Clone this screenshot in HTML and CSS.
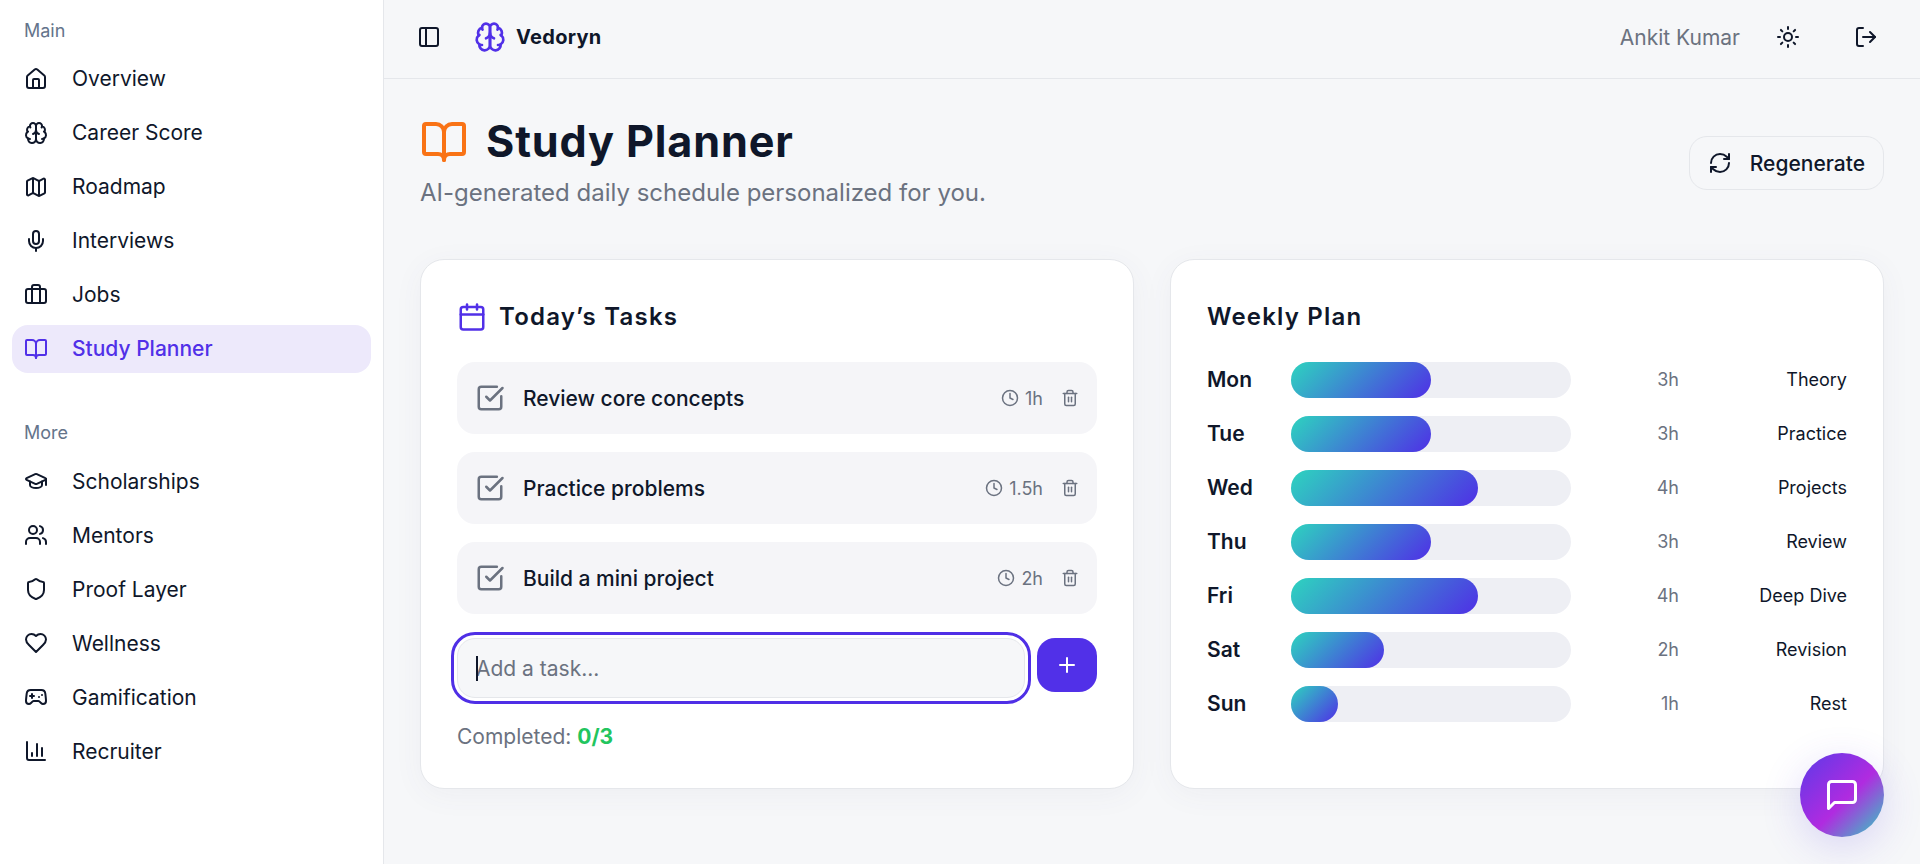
FILE: index.html
```html
<!DOCTYPE html>
<html lang="en">
<head>
  <meta charset="UTF-8">
  <title>Study Planner - Vedoryn</title>
  <link rel="stylesheet" href="styles.css">
</head>
<body>
  <!-- icon set, used through <use> below -->
  <svg class="sprite" xmlns="http://www.w3.org/2000/svg">
    <symbol id="i-home" viewBox="0 0 24 24"><path d="M15 21v-8a1 1 0 0 0-1-1h-4a1 1 0 0 0-1 1v8"/><path d="M3 10a2 2 0 0 1 .709-1.528l7-5.999a2 2 0 0 1 2.582 0l7 5.999A2 2 0 0 1 21 10v9a2 2 0 0 1-2 2H5a2 2 0 0 1-2-2z"/></symbol>
    <symbol id="i-brain" viewBox="0 0 24 24"><path d="M12 5a3 3 0 1 0-5.997.125 4 4 0 0 0-2.526 5.77 4 4 0 0 0 .556 6.588A4 4 0 1 0 12 18Z"/><path d="M12 5a3 3 0 1 1 5.997.125 4 4 0 0 1 2.526 5.77 4 4 0 0 1-.556 6.588A4 4 0 1 1 12 18Z"/><path d="M15 13a4.5 4.5 0 0 1-3-4 4.5 4.5 0 0 1-3 4"/><path d="M17.599 6.5a3 3 0 0 0 .399-1.375"/><path d="M6.003 5.125A3 3 0 0 0 6.401 6.5"/><path d="M3.477 10.896a4 4 0 0 1 .585-.396"/><path d="M19.938 10.5a4 4 0 0 1 .585.396"/><path d="M6 18a4 4 0 0 1-1.967-.516"/><path d="M19.967 17.484A4 4 0 0 1 18 18"/></symbol>
    <symbol id="i-map" viewBox="0 0 24 24"><path d="M14.106 5.553a2 2 0 0 0 1.788 0l3.659-1.83A1 1 0 0 1 21 4.619v12.764a1 1 0 0 1-.553.894l-4.553 2.277a2 2 0 0 1-1.788 0l-4.212-2.106a2 2 0 0 0-1.788 0l-3.659 1.83A1 1 0 0 1 3 19.381V6.618a1 1 0 0 1 .553-.894l4.553-2.277a2 2 0 0 1 1.788 0z"/><path d="M15 5.764v15"/><path d="M9 3.236v15"/></symbol>
    <symbol id="i-mic" viewBox="0 0 24 24"><path d="M12 19v3"/><path d="M19 10v2a7 7 0 0 1-14 0v-2"/><rect x="9" y="2" width="6" height="13" rx="3"/></symbol>
    <symbol id="i-briefcase" viewBox="0 0 24 24"><path d="M16 20V4a2 2 0 0 0-2-2h-4a2 2 0 0 0-2 2v16"/><rect x="2" y="6" width="20" height="14" rx="2"/></symbol>
    <symbol id="i-book" viewBox="0 0 24 24"><path d="M12 7v14"/><path d="M3 18a1 1 0 0 1-1-1V4a1 1 0 0 1 1-1h5a4 4 0 0 1 4 4 4 4 0 0 1 4-4h5a1 1 0 0 1 1 1v13a1 1 0 0 1-1 1h-6a3 3 0 0 0-3 3 3 3 0 0 0-3-3z"/></symbol>
    <symbol id="i-cap" viewBox="0 0 24 24"><path d="M21.42 10.922a1 1 0 0 0-.019-1.838L12.83 5.18a2 2 0 0 0-1.66 0L2.6 9.08a1 1 0 0 0 0 1.832l8.57 3.908a2 2 0 0 0 1.66 0z"/><path d="M22 10v6"/><path d="M6 12.5V16a6 3 0 0 0 12 0v-3.5"/></symbol>
    <symbol id="i-users" viewBox="0 0 24 24"><path d="M16 21v-2a4 4 0 0 0-4-4H6a4 4 0 0 0-4 4v2"/><circle cx="9" cy="7" r="4"/><path d="M22 21v-2a4 4 0 0 0-3-3.87"/><path d="M16 3.13a4 4 0 0 1 0 7.75"/></symbol>
    <symbol id="i-shield" viewBox="0 0 24 24"><path d="M20 13c0 5-3.5 7.5-7.66 8.95a1 1 0 0 1-.67-.01C7.5 20.5 4 18 4 13V6a1 1 0 0 1 1-1c2 0 4.5-1.2 6.24-2.72a1.17 1.17 0 0 1 1.52 0C14.51 3.81 17 5 19 5a1 1 0 0 1 1 1z"/></symbol>
    <symbol id="i-heart" viewBox="0 0 24 24"><path d="M19 14c1.49-1.46 3-3.21 3-5.5A5.5 5.5 0 0 0 16.5 3c-1.76 0-3 .5-4.5 2-1.5-1.5-2.74-2-4.5-2A5.5 5.5 0 0 0 2 8.5c0 2.3 1.5 4.05 3 5.5l7 7Z"/></symbol>
    <symbol id="i-gamepad" viewBox="0 0 24 24"><path d="M6 11h4"/><path d="M8 9v4"/><path d="M15 12h.01"/><path d="M18 10h.01"/><path d="M17.32 5H6.68a4 4 0 0 0-3.978 3.59c-.006.052-.01.101-.017.152C2.604 9.416 2 14.456 2 16a3 3 0 0 0 3 3c1 0 1.5-.5 2-1l1.414-1.414A2 2 0 0 1 9.828 16h4.344a2 2 0 0 1 1.414.586L17 18c.5.5 1 1 2 1a3 3 0 0 0 3-3c0-1.545-.604-6.584-.685-7.258-.007-.05-.011-.1-.017-.151A4 4 0 0 0 17.32 5z"/></symbol>
    <symbol id="i-chart" viewBox="0 0 24 24"><path d="M3 3v16a2 2 0 0 0 2 2h16"/><path d="M18 17V9"/><path d="M13 17V5"/><path d="M8 17v-3"/></symbol>
    <symbol id="i-panel" viewBox="0 0 24 24"><rect x="3" y="3" width="18" height="18" rx="2"/><path d="M9 3v18"/></symbol>
    <symbol id="i-sun" viewBox="0 0 24 24"><circle cx="12" cy="12" r="4"/><path d="M12 2v2"/><path d="M12 20v2"/><path d="m4.93 4.93 1.41 1.41"/><path d="m17.66 17.66 1.41 1.41"/><path d="M2 12h2"/><path d="M20 12h2"/><path d="m6.34 17.66-1.41 1.41"/><path d="m19.07 4.93-1.41 1.41"/></symbol>
    <symbol id="i-logout" viewBox="0 0 24 24"><path d="M9 21H5a2 2 0 0 1-2-2V5a2 2 0 0 1 2-2h4"/><path d="m16 17 5-5-5-5"/><path d="M21 12H9"/></symbol>
    <symbol id="i-refresh" viewBox="0 0 24 24"><path d="M3 12a9 9 0 0 1 9-9 9.75 9.75 0 0 1 6.74 2.74L21 8"/><path d="M21 3v5h-5"/><path d="M21 12a9 9 0 0 1-9 9 9.75 9.75 0 0 1-6.74-2.74L3 16"/><path d="M8 16H3v5"/></symbol>
    <symbol id="i-calendar" viewBox="0 0 24 24"><path d="M8 2v4"/><path d="M16 2v4"/><rect x="3" y="4" width="18" height="18" rx="2"/><path d="M3 10h18"/></symbol>
    <symbol id="i-check" viewBox="0 0 24 24"><path d="M21 10.5V19a2 2 0 0 1-2 2H5a2 2 0 0 1-2-2V5a2 2 0 0 1 2-2h12.5"/><path d="m9 11 3 3L22 4"/></symbol>
    <symbol id="i-clock" viewBox="0 0 24 24"><circle cx="12" cy="12" r="10"/><path d="M12 6v6l4 2"/></symbol>
    <symbol id="i-trash" viewBox="0 0 24 24"><path d="M3 6h18"/><path d="M19 6v14c0 1-1 2-2 2H7c-1 0-2-1-2-2V6"/><path d="M8 6V4c0-1 1-2 2-2h4c1 0 2 1 2 2v2"/><path d="M10 11v6"/><path d="M14 11v6"/></symbol>
    <symbol id="i-plus" viewBox="0 0 24 24"><path d="M5 12h14"/><path d="M12 5v14"/></symbol>
    <symbol id="i-chat" viewBox="0 0 24 24"><path d="M21 15a2 2 0 0 1-2 2H7l-4 4V5a2 2 0 0 1 2-2h14a2 2 0 0 1 2 2z"/></symbol>
  </svg>

  <aside class="sidebar">
    <div class="nav-label">Main</div>
    <nav class="nav">
      <a class="nav-item"><svg class="icon"><use href="#i-home"/></svg>Overview</a>
      <a class="nav-item"><svg class="icon"><use href="#i-brain"/></svg>Career Score</a>
      <a class="nav-item"><svg class="icon"><use href="#i-map"/></svg>Roadmap</a>
      <a class="nav-item"><svg class="icon"><use href="#i-mic"/></svg>Interviews</a>
      <a class="nav-item"><svg class="icon"><use href="#i-briefcase"/></svg>Jobs</a>
      <a class="nav-item active"><svg class="icon"><use href="#i-book"/></svg>Study Planner</a>
    </nav>
    <div class="nav-label more">More</div>
    <nav class="nav">
      <a class="nav-item"><svg class="icon"><use href="#i-cap"/></svg>Scholarships</a>
      <a class="nav-item"><svg class="icon"><use href="#i-users"/></svg>Mentors</a>
      <a class="nav-item"><svg class="icon"><use href="#i-shield"/></svg>Proof Layer</a>
      <a class="nav-item"><svg class="icon"><use href="#i-heart"/></svg>Wellness</a>
      <a class="nav-item"><svg class="icon"><use href="#i-gamepad"/></svg>Gamification</a>
      <a class="nav-item"><svg class="icon"><use href="#i-chart"/></svg>Recruiter</a>
    </nav>
  </aside>

  <div class="main">
    <header class="topbar">
      <svg class="icon"><use href="#i-panel"/></svg>
      <div class="brand">
        <svg class="icon brand-icon"><use href="#i-brain"/></svg>
        <span class="brand-name">Vedoryn</span>
      </div>
      <span class="user-name">Ankit Kumar</span>
      <svg class="icon sun"><use href="#i-sun"/></svg>
      <svg class="icon logout"><use href="#i-logout"/></svg>
    </header>

    <main class="page">
      <div class="page-head">
        <div class="page-intro">
          <h1 class="page-title"><svg class="icon title-icon"><use href="#i-book"/></svg>Study Planner</h1>
          <p class="page-sub">AI-generated daily schedule personalized for you.</p>
        </div>
        <button class="regen" type="button"><svg class="icon"><use href="#i-refresh"/></svg>Regenerate</button>
      </div>

      <div class="cards">
        <section class="card">
          <h2 class="card-title"><svg class="icon cal-icon"><use href="#i-calendar"/></svg>Today’s Tasks</h2>
          <div class="tasks">
            <div class="task">
              <svg class="icon task-check"><use href="#i-check"/></svg>
              <span class="task-name">Review core concepts</span>
              <span class="task-time"><svg class="icon small"><use href="#i-clock"/></svg>1h</span>
              <svg class="icon small task-del"><use href="#i-trash"/></svg>
            </div>
            <div class="task">
              <svg class="icon task-check"><use href="#i-check"/></svg>
              <span class="task-name">Practice problems</span>
              <span class="task-time"><svg class="icon small"><use href="#i-clock"/></svg>1.5h</span>
              <svg class="icon small task-del"><use href="#i-trash"/></svg>
            </div>
            <div class="task">
              <svg class="icon task-check"><use href="#i-check"/></svg>
              <span class="task-name">Build a mini project</span>
              <span class="task-time"><svg class="icon small"><use href="#i-clock"/></svg>2h</span>
              <svg class="icon small task-del"><use href="#i-trash"/></svg>
            </div>
          </div>
          <form class="add-form">
            <div class="add-field">
              <input class="add-input" type="text" placeholder="Add a task...">
            </div>
            <button class="add-btn" type="button"><svg class="icon"><use href="#i-plus"/></svg></button>
          </form>
          <p class="done">Completed: <b>0/3</b></p>
        </section>

        <section class="card">
          <h2 class="card-title">Weekly Plan</h2>
          <div class="week">
            <div class="day">
              <span class="day-name">Mon</span>
              <div class="bar"><div class="fill" style="width:50%"></div></div>
              <span class="day-hours">3h</span><span class="day-topic">Theory</span>
            </div>
            <div class="day">
              <span class="day-name">Tue</span>
              <div class="bar"><div class="fill" style="width:50%"></div></div>
              <span class="day-hours">3h</span><span class="day-topic">Practice</span>
            </div>
            <div class="day">
              <span class="day-name">Wed</span>
              <div class="bar"><div class="fill" style="width:66.67%"></div></div>
              <span class="day-hours">4h</span><span class="day-topic">Projects</span>
            </div>
            <div class="day">
              <span class="day-name">Thu</span>
              <div class="bar"><div class="fill" style="width:50%"></div></div>
              <span class="day-hours">3h</span><span class="day-topic">Review</span>
            </div>
            <div class="day">
              <span class="day-name">Fri</span>
              <div class="bar"><div class="fill" style="width:66.67%"></div></div>
              <span class="day-hours">4h</span><span class="day-topic">Deep Dive</span>
            </div>
            <div class="day">
              <span class="day-name">Sat</span>
              <div class="bar"><div class="fill" style="width:33.33%"></div></div>
              <span class="day-hours">2h</span><span class="day-topic">Revision</span>
            </div>
            <div class="day">
              <span class="day-name">Sun</span>
              <div class="bar"><div class="fill" style="width:16.67%"></div></div>
              <span class="day-hours">1h</span><span class="day-topic">Rest</span>
            </div>
          </div>
        </section>
      </div>
    </main>
  </div>

  <button class="chat-fab" type="button"><svg class="icon"><use href="#i-chat"/></svg></button>
</body>
</html>
```

FILE: styles.css
```css
* {
  box-sizing: border-box;
}
body {
  margin: 0;
  height: 100vh;
  display: flex;
  overflow: hidden;
  background: #f6f7f9;
  color: #0f172a;
  font-family: Inter, "Liberation Sans", sans-serif;
}
.sprite {
  display: none;
}
.icon {
  width: 24px;
  height: 24px;
  flex: none;
  fill: none;
  stroke: currentColor;
  stroke-width: 2;
  stroke-linecap: round;
  stroke-linejoin: round;
}
.icon.small {
  width: 18px;
  height: 18px;
}

/* sidebar */
.sidebar {
  width: 384px;
  flex: none;
  background: #fff;
  border-right: 1px solid #e5e7eb;
  padding: 18.5px 12px;
}
.nav-label {
  height: 24px;
  margin-bottom: 12px;
  padding-left: 12px;
  font-size: 18px;
  line-height: 24px;
  color: #64748b;
}
.nav-label.more {
  margin-top: 48px;
  margin-bottom: 12.5px;
}
.nav {
  display: flex;
  flex-direction: column;
  gap: 6px;
}
.nav-item {
  display: flex;
  align-items: center;
  gap: 24px;
  height: 48px;
  padding: 0 12px;
  border-radius: 16px;
  font-size: 21px;
}
.nav-item.active {
  background: #ede9fb;
  color: #5130e8;
  font-weight: 500;
}

/* top bar */
.main {
  flex: 1;
  min-width: 0;
}
.topbar {
  height: 79px;
  display: flex;
  align-items: center;
  padding: 0 36px 4px 33px;
  border-bottom: 1px solid #e5e7eb;
}
.brand {
  display: flex;
  align-items: center;
  gap: 10px;
  margin-left: 33px;
  margin-right: auto;
}
.brand-icon {
  width: 32px;
  height: 32px;
  color: #5130e8;
}
.brand-name {
  font-size: 20px;
  font-weight: 700;
  letter-spacing: 0.3px;
}
.user-name {
  font-size: 21px;
  color: #6b7280;
}
.sun {
  margin-left: 36px;
}
.logout {
  margin-left: 54px;
  margin-right: 6px;
}

/* page */
.page {
  padding: 36px;
}
.page-head {
  display: flex;
  justify-content: space-between;
  align-items: center;
  height: 96px;
  margin-bottom: 48px;
}
.page-intro {
  align-self: flex-start;
}
.page-title {
  display: flex;
  align-items: center;
  gap: 18px;
  margin: 0;
  font-size: 43.2px;
  line-height: 53px;
  font-weight: 700;
  letter-spacing: 0.85px;
}
.title-icon {
  width: 48px;
  height: 48px;
  color: #f97316;
}
.page-sub {
  margin: 10px 0 0;
  font-size: 24px;
  line-height: 30px;
  color: #6b7280;
}
.regen {
  display: flex;
  align-items: center;
  gap: 18px;
  height: 54px;
  padding: 0 18px;
  background: #f6f7f9;
  border: 1px solid #e5e7eb;
  border-radius: 18px;
  color: #0f172a;
  font: 500 21px Inter, sans-serif;
}

/* cards */
.cards {
  display: grid;
  grid-template-columns: 1fr 1fr;
  gap: 36px;
}
.card {
  height: 530px;
  padding: 36px;
  background: #fff;
  border: 1px solid #e5e7eb;
  border-radius: 24px;
  box-shadow: 0 6px 30px rgba(80, 80, 120, 0.05);
}
.card-title {
  display: flex;
  align-items: center;
  gap: 12px;
  margin: 0 0 24px;
  font-size: 24px;
  line-height: 42px;
  font-weight: 600;
  letter-spacing: 1.2px;
}
.cal-icon {
  width: 30px;
  height: 30px;
  color: #5130e8;
}

/* tasks */
.tasks {
  display: flex;
  flex-direction: column;
  gap: 18px;
}
.task {
  display: flex;
  align-items: center;
  height: 72px;
  padding: 0 18px;
  background: #f5f5f8;
  border-radius: 18px;
}
.task-check {
  width: 30px;
  height: 30px;
  color: #6b7280;
}
.task-name {
  flex: 1;
  margin-left: 18px;
  font-size: 21px;
  font-weight: 500;
}
.task-time {
  display: flex;
  align-items: center;
  gap: 6px;
  font-size: 18px;
  color: #6b7280;
}
.task-del {
  margin-left: 18px;
  color: #6b7280;
}
.add-form {
  display: flex;
  align-items: flex-start;
  gap: 12px;
  margin-top: 24px;
}
.add-field {
  position: relative;
  flex: 1;
  min-width: 0;
}
/* text caret of the focused field */
.add-field::before {
  content: "";
  position: absolute;
  left: 19px;
  top: 18px;
  width: 2px;
  height: 25px;
  background: #0f172a;
}
.add-input {
  display: block;
  width: 100%;
  height: 60px;
  padding: 0 18px;
  background: #f6f7f9;
  border: 1px solid #e5e7eb;
  border-radius: 18px;
  outline: 3px solid #4f2fe6;
  outline-offset: 3px;
  color: #0f172a;
  font: 400 21px Inter, sans-serif;
}
.add-input::placeholder {
  color: #6b7280;
}
.add-btn {
  display: flex;
  align-items: center;
  justify-content: center;
  width: 60px;
  height: 54px;
  padding: 0;
  background: #5130e8;
  border: 0;
  border-radius: 18px;
  color: #fff;
}
.done {
  margin: 24px 0 0;
  font-size: 21px;
  line-height: 30px;
  color: #6b7280;
}
.done b {
  color: #22c55e;
}

/* weekly plan */
.week {
  display: flex;
  flex-direction: column;
  gap: 18px;
}
.day {
  display: grid;
  grid-template-columns: 84px 280px 108px 1fr;
  align-items: center;
  height: 36px;
}
.day-name {
  padding-bottom: 2px;
  font-size: 21px;
  font-weight: 600;
}
.bar {
  height: 36px;
  background: #eeeff4;
  border-radius: 18px;
}
.fill {
  height: 100%;
  background: linear-gradient(135deg, #2dd4bf, #4f2fe6);
  border-radius: 18px;
}
.day-hours {
  padding-bottom: 2px;
  text-align: right;
  font-size: 18px;
  color: #6b7280;
}
.day-topic {
  padding-bottom: 2px;
  text-align: right;
  font-size: 18px;
}

/* chat button, floats over the page */
.chat-fab {
  position: fixed;
  right: 36px;
  bottom: 27px;
  display: flex;
  align-items: center;
  justify-content: center;
  width: 84px;
  height: 84px;
  padding: 0;
  border: 0;
  border-radius: 50%;
  background: linear-gradient(135deg, #5b3ae8, #b02be0 55%, #2dd4bf);
  box-shadow: 0 10px 40px rgba(90, 60, 230, 0.18);
  color: #fff;
}
.chat-fab .icon {
  width: 36px;
  height: 36px;
}
```
